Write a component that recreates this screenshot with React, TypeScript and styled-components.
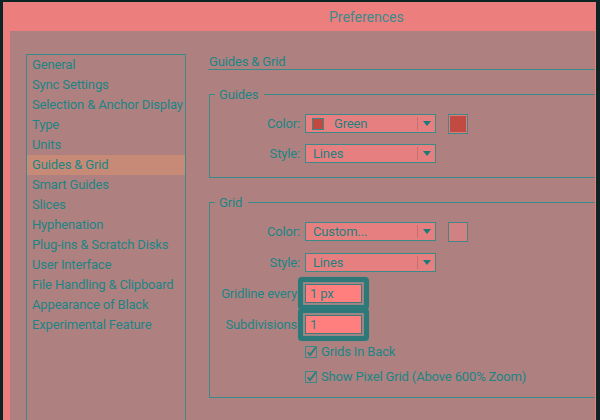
import React from "react";
import styled, { createGlobalStyle } from "styled-components";

const C = {
  frame: "#0c2424",
  chrome: "#ec7e7e",
  panel: "#ae8080",
  text: "#1c8585",
  title: "#3b8c8c",
  line: "#3a8a8a",
  control: "#e68080",
  input: "#ff7f7f",
  highlight: "#c68a76",
  ring: "#2d7878",
};

const GlobalStyle = createGlobalStyle`
  html, body {
    margin: 0;
    padding: 0;
    width: 600px;
    height: 420px;
    overflow: hidden;
    background: ${C.frame};
  }
  body {
    font-family: Roboto, "Liberation Sans", sans-serif;
    font-size: 13px;
    letter-spacing: -0.15px;
    color: ${C.text};
  }
  * { box-sizing: border-box; }
`;

const Window = styled.div`
  margin: 2px 4px 0 3px;
  height: 418px;
  background: ${C.chrome};
  padding: 0 1px 0 7px;
  display: flex;
  flex-direction: column;
`;

const TitleBar = styled.div`
  height: 29px;
  flex: none;
  display: flex;
  align-items: center;
  padding-left: 319px;
  font-size: 14px;
  letter-spacing: 0;
  color: ${C.title};
`;

const Content = styled.div`
  flex: 1;
  min-height: 0;
  background: ${C.panel};
  display: flex;
  align-items: flex-start;
  gap: 22px;
  padding: 23px 0 0 16px;
  overflow: hidden;
`;

const Sidebar = styled.ul`
  list-style: none;
  margin: 0;
  padding: 0;
  width: 160px;
  height: 400px;
  flex: none;
  border: 1px solid ${C.line};
`;

const NavItem = styled.li<{ $active?: boolean }>`
  height: 20px;
  line-height: 20px;
  padding-left: 5px;
  white-space: nowrap;
  background: ${(p) => (p.$active ? C.highlight : "transparent")};
`;

const Panel = styled.div`
  width: 420px;
  flex: none;
  display: flex;
  flex-direction: column;
`;

const PanelHeader = styled.div`
  height: 16px;
  line-height: 15px;
  padding-left: 1px;
  border-bottom: 1px solid ${C.line};
`;

const Group = styled.fieldset<{ $gap: number }>`
  margin: 17px 0 0 1px;
  padding: 12px 0 ${(p) => (p.$gap === 11 ? 14 : 13)}px 0;
  border: 1px solid ${C.line};
  display: flex;
  flex-direction: column;
  gap: ${(p) => p.$gap}px;
  min-width: 0;
`;

const Legend = styled.legend`
  margin-left: 5px;
  padding: 0 6px 0 4px;
  line-height: 15px;
`;

const Row = styled.div`
  display: flex;
  align-items: center;
  height: 19px;
`;

const Label = styled.label`
  width: 90px;
  flex: none;
  text-align: right;
  margin-right: 5px;
  white-space: nowrap;
`;

const SelectBox = styled.div`
  width: 131px;
  height: 19px;
  flex: none;
  display: flex;
  align-items: stretch;
  border: 1px solid ${C.line};
  background: ${C.control};
  color: #1f8080;
`;

const SelectValue = styled.div`
  flex: 1;
  display: flex;
  align-items: center;
  gap: 10px;
  padding-left: 6px;
  line-height: 17px;
`;

const ValueText = styled.span<{ $indent?: boolean }>`
  padding-left: ${(p) => (p.$indent ? 1 : 0)}px;
`;

const ChipSwatch = styled.span`
  width: 12px;
  height: 12px;
  flex: none;
  border: 1px solid ${C.line};
  background: #c2493f;
`;

const ArrowArea = styled.div`
  width: 18px;
  flex: none;
  display: flex;
  align-items: center;
  justify-content: center;
  border-left: 1px solid #c56f6f;
  margin: 2px 0;
`;

const Arrow = styled.span`
  width: 0;
  height: 0;
  border-left: 4px solid transparent;
  border-right: 4px solid transparent;
  border-top: 5px solid #1b7a7a;
`;

const BigSwatch = styled.span<{ $fill: string }>`
  width: 20px;
  height: 20px;
  flex: none;
  margin-left: 12px;
  border: 1px solid ${C.line};
  box-shadow: inset 0 0 0 1px #e27878;
  background: ${(p) => p.$fill};
`;

const FocusField = styled.span`
  position: relative;
  display: inline-flex;
  &::after {
    content: "";
    position: absolute;
    inset: -7px;
    border: 5px solid ${C.ring};
    border-radius: 4px;
    box-shadow: inset 0 0 2px #4f9c9c, 0 0 1px #4f9c9c;
    pointer-events: none;
  }
`;

const TextInput = styled.input`
  width: 57px;
  height: 19px;
  margin: 0;
  border: 1px solid #3a7c7c;
  background: ${C.input};
  padding: 0 0 0 4px;
  font: inherit;
  letter-spacing: inherit;
  color: #1f8080;
  outline: none;
`;

const Checks = styled.div`
  display: flex;
  flex-direction: column;
  gap: 10px;
  margin-top: -2px;
  padding-left: 95px;
`;

const CheckRow = styled.label`
  display: flex;
  align-items: center;
  gap: 3px;
  height: 15px;
  white-space: nowrap;
`;

const CheckIcon = () => (
  <svg width="14" height="14" viewBox="0 0 14 14" style={{ flex: "none", marginLeft: -1 }}>
    <rect x="1.5" y="1.5" width="11" height="11" fill="none" stroke={C.line} strokeWidth="1" />
    <polyline points="3.8,7.2 6,10 11.8,2.2" fill="none" stroke="#1f8080" strokeWidth="1.7" />
  </svg>
);

const navItems = [
  "General",
  "Sync Settings",
  "Selection & Anchor Display",
  "Type",
  "Units",
  "Guides & Grid",
  "Smart Guides",
  "Slices",
  "Hyphenation",
  "Plug-ins & Scratch Disks",
  "User Interface",
  "File Handling & Clipboard",
  "Appearance of Black",
  "Experimental Feature",
];

const Select = ({ value, swatch }: { value: string; swatch?: boolean }) => (
  <SelectBox>
    <SelectValue>
      {swatch && <ChipSwatch />}
      <ValueText $indent={!swatch}>{value}</ValueText>
    </SelectValue>
    <ArrowArea>
      <Arrow />
    </ArrowArea>
  </SelectBox>
);

export default function App() {
  return (
    <>
      <GlobalStyle />
      <Window>
        <TitleBar>Preferences</TitleBar>
        <Content>
          <Sidebar>
            {navItems.map((item) => (
              <NavItem key={item} $active={item === "Guides & Grid"}>
                {item}
              </NavItem>
            ))}
          </Sidebar>
          <Panel>
            <PanelHeader>Guides &amp; Grid</PanelHeader>
            <Group $gap={11}>
              <Legend>Guides</Legend>
              <Row>
                <Label>Color:</Label>
                <Select value="Green" swatch />
                <BigSwatch $fill="#c14b41" />
              </Row>
              <Row>
                <Label>Style:</Label>
                <Select value="Lines" />
              </Row>
            </Group>
            <Group $gap={12}>
              <Legend>Grid</Legend>
              <Row>
                <Label>Color:</Label>
                <Select value="Custom..." />
                <BigSwatch $fill="#d08282" />
              </Row>
              <Row>
                <Label>Style:</Label>
                <Select value="Lines" />
              </Row>
              <Row>
                <Label>Gridline every:</Label>
                <FocusField>
                  <TextInput defaultValue="1 px" />
                </FocusField>
              </Row>
              <Row>
                <Label>Subdivisions:</Label>
                <FocusField>
                  <TextInput defaultValue="1" />
                </FocusField>
              </Row>
              <Checks>
                <CheckRow>
                  <CheckIcon />
                  Grids In Back
                </CheckRow>
                <CheckRow>
                  <CheckIcon />
                  Show Pixel Grid (Above 600% Zoom)
                </CheckRow>
              </Checks>
            </Group>
          </Panel>
        </Content>
      </Window>
    </>
  );
}
